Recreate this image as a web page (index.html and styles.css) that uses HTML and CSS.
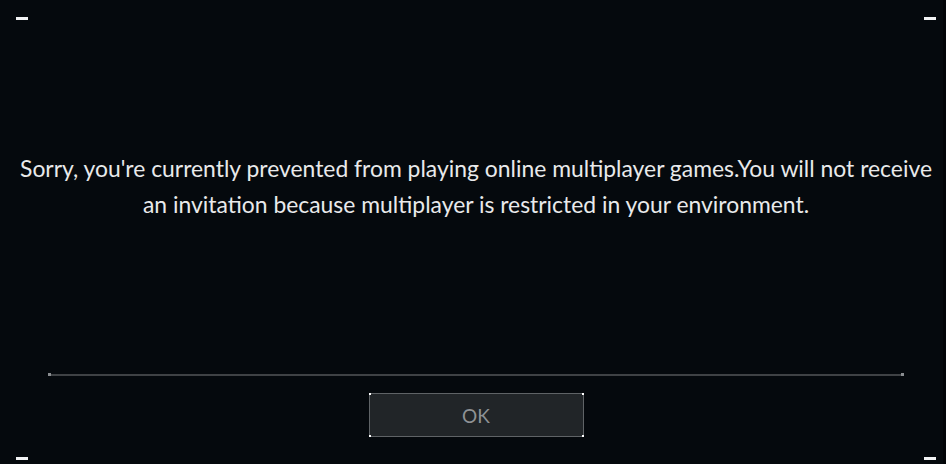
FILE: index.html
```html
<!DOCTYPE html>
<html>
<head>
<meta charset="utf-8">
<link rel="stylesheet" href="styles.css">
</head>
<body>
<div class="screen">
  <span class="corner tl"></span>
  <span class="corner tr"></span>
  <span class="corner bl"></span>
  <span class="corner br"></span>
  <div class="content">
    <p class="message">Sorry, you're currently prevented from playing online multiplayer games.You will not receive<br>an invitation because multiplayer is restricted in your environment.</p>
    <div class="divider"><span class="cap"></span><span class="rule"></span><span class="cap"></span></div>
    <div class="actions">
      <button class="btn">OK<span class="dot d1"></span><span class="dot d2"></span><span class="dot d3"></span><span class="dot d4"></span></button>
    </div>
  </div>
</div>
</body>
</html>
```
FILE: styles.css
```css
html, body {
  margin: 0;
  padding: 0;
  background: #020407;
}
.screen {
  position: relative;
  width: 943px;
  height: 464px;
  background: #05090d;
  font-family: "Lato", "Open Sans", sans-serif;
}
.corner {
  position: absolute;
  width: 12px;
  height: 3px;
  background: #f2f3f4;
}
.tl { left: 16px; top: 17px; }
.tr { left: 924px; top: 17px; }
.bl { left: 16px; top: 457px; }
.br { left: 924px; top: 457px; }
.content {
  display: flex;
  flex-direction: column;
  align-items: center;
  padding-top: 150px;
  padding-left: 9px;
}
.message {
  margin: 0;
  color: #e9eaeb;
  font-size: 22.9px;
  line-height: 36px;
  text-align: center;
  white-space: nowrap;
}
.divider {
  margin-top: 151px;
  width: 856px;
  display: flex;
  align-items: center;
}
.cap {
  width: 3px;
  height: 3px;
  background: #8a8d90;
}
.rule {
  flex: 1;
  height: 2px;
  background: #3f4245;
}
.actions {
  margin-top: 17px;
  display: flex;
  justify-content: center;
}
.btn {
  position: relative;
  width: 215px;
  height: 44px;
  box-sizing: border-box;
  background: #212528;
  border: 1px solid #5f6366;
  color: #8e9295;
  font-family: "Lato", "Open Sans", sans-serif;
  font-size: 19px;
  padding: 0;
  margin: 0;
}
.dot {
  position: absolute;
  width: 2px;
  height: 2px;
  background: #ffffff;
}
.d1 { left: -1px; top: -1px; }
.d2 { right: -1px; top: -1px; }
.d3 { left: -1px; bottom: -1px; }
.d4 { right: -1px; bottom: -1px; }
```
